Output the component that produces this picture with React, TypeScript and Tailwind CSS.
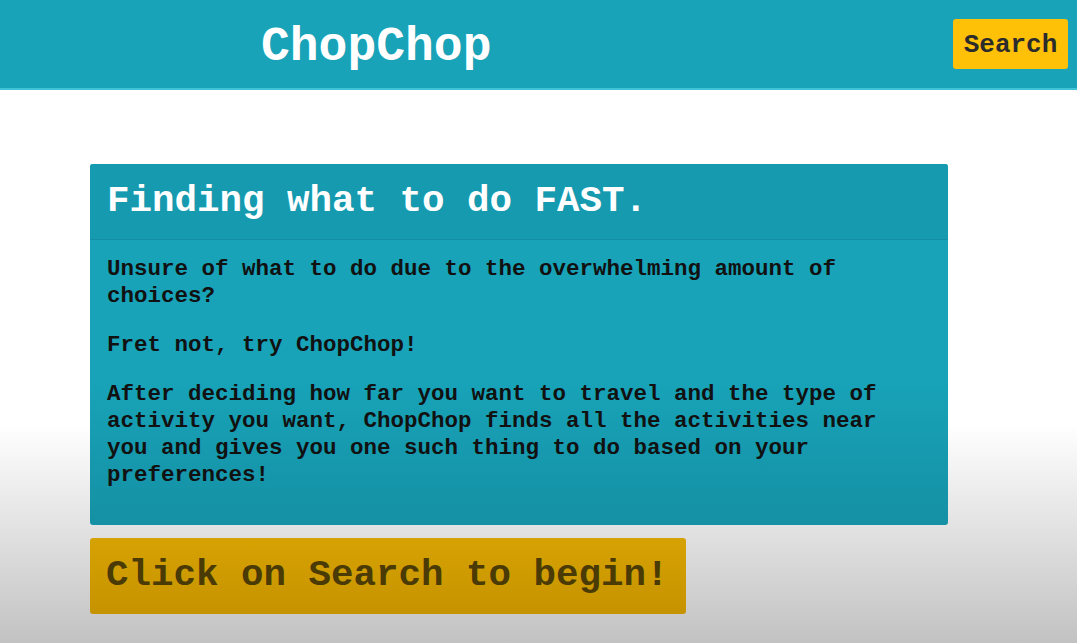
export default function App() {
	return (
		<div
			className="min-h-screen bg-[linear-gradient(to_bottom,#ffffff_0%,#ffffff_66%,#c2c2c2_100%)] font-bold text-[#111]"
			style={{fontFamily: '"Liberation Mono", "Courier New", monospace'}}
		>
			<header className="h-[90px] bg-[#18a3b9] border-b-2 border-[#3fc3d6] flex items-center justify-between pl-[261px] pr-[9px]">
				<h1 className="text-[48px] leading-none text-white pt-[5px]">ChopChop</h1>
				<button className="h-[50px] w-[115px] bg-[#ffc107] rounded-[3px] text-[26px] leading-none text-[#2b2b2b] pt-[1px]">
					Search
				</button>
			</header>

			<main className="pl-[90px] pt-[74px]">
				<section className="w-[858px] rounded-[3px] overflow-hidden bg-[linear-gradient(to_bottom,#18a3b8_0%,#18a3b8_60%,#1590a4_100%)]">
					<div className="h-[76px] bg-[#169aaf] border-b border-[#138ea2] flex items-center px-[17px]">
						<h2 className="text-[37.5px] leading-none text-white pt-[1px]">Finding what to do FAST.</h2>
					</div>
					<div className="pl-[17px] pr-[30px] pt-[16px] pb-[36px] text-[22.5px] leading-[27px] flex flex-col gap-[22px]">
						<p>Unsure of what to do due to the overwhelming amount of choices?</p>
						<p>Fret not, try ChopChop!</p>
						<p>
							After deciding how far you want to travel and the type of activity you want, ChopChop finds all
							the activities near you and gives you one such thing to do based on your preferences!
						</p>
					</div>
				</section>

				<button className="mt-[13px] h-[76px] w-[596px] rounded-[3px] bg-[linear-gradient(to_bottom,#d6a203,#c69300)] text-[37.5px] leading-none text-[#4a3a05] text-left pl-[16px] whitespace-nowrap overflow-hidden">
					Click on Search to begin!
				</button>
			</main>
		</div>
	);
}
